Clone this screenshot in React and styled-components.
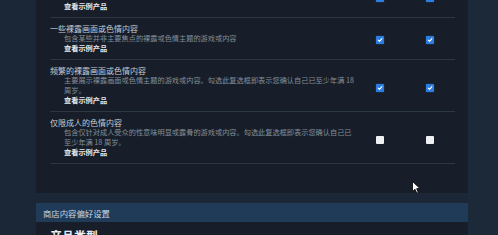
import React from 'react';
import styled, { createGlobalStyle } from 'styled-components';

const GlobalStyle = createGlobalStyle`
  html, body {
    margin: 0;
    padding: 0;
    background: #1b2636;
    overflow: hidden;
  }
  body {
    font-family: "Noto Sans CJK SC", "Noto Sans", sans-serif;
  }
`;

const Page = styled.div`
  position: relative;
  display: flex;
  width: 498px;
  height: 235px;
  overflow: hidden;
  background: #1b2636;
`;

const Gutter = styled.div`
  width: ${(p) => p.$width || 'auto'};
  flex: ${(p) => (p.$grow ? 1 : 'none')};
  background: ${(p) => p.$bg};
`;

const Main = styled.div`
  width: 432px;
  display: flex;
  flex-direction: column;
`;

const Panel = styled.div`
  height: 193px;
  flex: none;
  overflow: hidden;
  background: #171e29;
  padding: 0 13px 0 14px;
`;

const List = styled.div`
  margin-top: -25px;
`;

const Row = styled.div`
  display: flex;
  align-items: center;
  border-bottom: 1px solid #2c3744;
  padding: 5px 0 6px;
`;

const TextCol = styled.div`
  flex: 1;
  min-width: 0;
`;

const Title = styled.div`
  font-size: 8px;
  line-height: 11px;
  color: #c3cdd7;
  white-space: nowrap;
`;

const Desc = styled.div`
  margin-left: 14px;
  font-size: 7.2px;
  line-height: 9.5px;
  color: #848e99;
  white-space: nowrap;
`;

const Link = styled.div`
  margin-left: 14px;
  font-size: 7.2px;
  line-height: 10px;
  font-weight: 700;
  color: #e4ebf1;
`;

const Cell = styled.div`
  width: 50px;
  display: flex;
  justify-content: center;
  margin-top: 5px;
`;

const Box = styled.span`
  width: 8px;
  height: 8px;
  border-radius: 1px;
  display: flex;
  align-items: center;
  justify-content: center;
  background: ${(p) => (p.$checked ? '#2b7de0' : '#eef0f2')};
  box-shadow: ${(p) => (p.$checked ? '0 0 1px #3d8fee' : 'none')};
`;

const Gap = styled.div`
  height: 10px;
  flex: none;
`;

const SectionBar = styled.div`
  height: 19px;
  flex: none;
  display: flex;
  align-items: center;
  padding-left: 7px;
  background: #1f3b58;
  color: #c9d6e2;
  font-size: 8.4px;
`;

const SectionBody = styled.div`
  flex: none;
  height: 40px;
  background: #171e29;
  padding: 7px 0 0 14px;
`;

const Heading = styled.div`
  font-size: 12px;
  font-weight: 700;
  color: #e6edf3;
  line-height: 14px;
`;

const Cursor = styled.svg`
  position: absolute;
  left: 412px;
  top: 181px;
`;

const Checkbox = ({ checked }) => (
  <Box $checked={checked}>
    {checked && (
      <svg width="6" height="6" viewBox="0 0 10 10">
        <path d="M2 5.2 L4.2 7.4 L8.2 2.6" fill="none" stroke="#fff" strokeWidth="1.8" strokeLinecap="round" strokeLinejoin="round" />
      </svg>
    )}
  </Box>
);

const rows = [
  {
    title: '频繁的暴力或血腥内容',
    desc: ['包含以暴力或血腥画面为主要内容的游戏或内容'],
    checked: true,
  },
  {
    title: '一些裸露画面或色情内容',
    desc: ['包含某些并非主要焦点的裸露或色情主题的游戏或内容'],
    checked: true,
  },
  {
    title: '频繁的裸露画面或色情内容',
    desc: ['主要展示裸露画面或色情主题的游戏或内容。勾选此复选框即表示您确认自己已至少年满 18', '周岁。'],
    checked: true,
  },
  {
    title: '仅限成人的色情内容',
    desc: ['包含仅针对成人受众的性意味明显或露骨的游戏或内容。勾选此复选框即表示您确认自己已', '至少年满 18 周岁。'],
    checked: false,
  },
];

const App = () => (
  <>
    <GlobalStyle />
    <Page>
      <Gutter $width="36px" $bg="#1b2636" />
      <Main>
        <Panel>
          <List>
            {rows.map((r) => (
              <Row key={r.title}>
                <TextCol>
                  <Title>{r.title}</Title>
                  <Desc>
                    {r.desc.map((line, i) => (
                      <div key={i}>{line}</div>
                    ))}
                  </Desc>
                  <Link>查看示例产品</Link>
                </TextCol>
                <Cell>
                  <Checkbox checked={r.checked} />
                </Cell>
                <Cell>
                  <Checkbox checked={r.checked} />
                </Cell>
              </Row>
            ))}
          </List>
        </Panel>
        <Gap />
        <SectionBar>商店内容偏好设置</SectionBar>
        <SectionBody>
          <Heading>产品类型</Heading>
        </SectionBody>
      </Main>
      <Gutter $grow $bg="#1c2939" />
      <Cursor width="9" height="13" viewBox="0 0 9 13">
        <path d="M0.5 0.5 L0.5 10.5 L3 8.2 L4.8 12.2 L6.3 11.5 L4.6 7.6 L8 7.6 Z" fill="#fff" stroke="#000" strokeWidth="0.8" strokeLinejoin="round" />
      </Cursor>
    </Page>
  </>
);

export default App;
